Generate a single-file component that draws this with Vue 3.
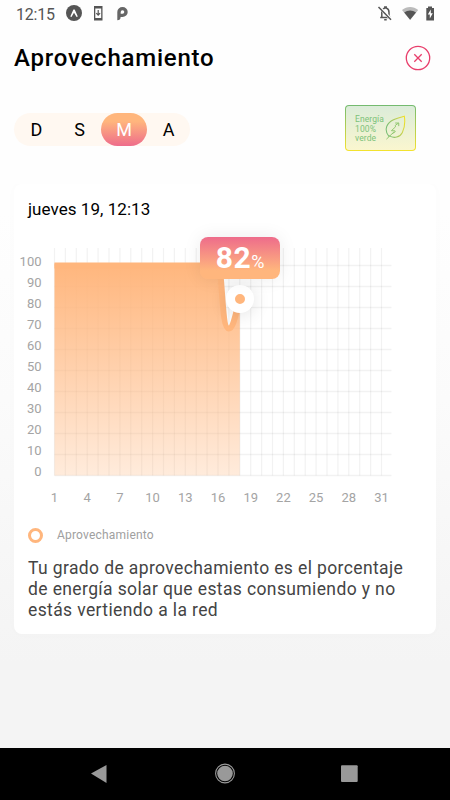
<template>
  <div class="screen">
    <div class="status-bar">
      <span class="clock">12:15</span>
      <svg class="status-left" width="64" height="18" viewBox="0 0 64 18">
        <circle cx="8" cy="9" r="8" fill="#555" />
        <path d="M4.300 12.400 7.400 5.600h1.300l3.100 6.800-1.200.6L8 8.800 5.500 13z" fill="#fff" />
        <path fill-rule="evenodd" d="M28 2h8.500v14.500H28zM29.300 4.500v9.500h5.900V4.500z" fill="#555" />
        <path d="M32.200 6v5M30.300 9.200l1.900 2 1.900-2" fill="none" stroke="#555" stroke-width="1.200" />
        <path fill-rule="evenodd" d="M51.300 16.300V8a5.200 5 0 1 1 5.200 5h-1.900a3.300 3.300 0 0 1-3.300 3.300zM54.700 9.800h1.700a1.800 1.800 0 1 0-1.700-1.800z" fill="#666" />
      </svg>
      <svg class="status-right" width="60" height="18" viewBox="0 0 60 18">
        <path d="M4.800 13.500V8.300c0-2.800 1.300-4 3-4.400V3h1.400v.9c1.900.5 2.800 2 2.800 4.400v5.200M3.200 13.600h10.500M7.200 15.700h2.500" fill="none" stroke="#555" stroke-width="1.500" />
        <path d="M2.300 3 14.400 15.700" stroke="#fff" stroke-width="3" />
        <path d="M1.500 3 14 15.800" stroke="#555" stroke-width="1.500" />
        <path d="M25 6c4.800-4 11.400-4 16.200 0l-8.100 9.900z" fill="#bbb" />
        <path d="M27.200 8.500c3.500-2.700 8.300-2.700 11.800 0l-5.900 7.300z" fill="#555" />
        <path d="M49.300 4H51V2.500h4V4h2v12.500h-7.700z" fill="#555" />
        <path d="m53.800 5.500-3 5h2v4l3-5.200h-2z" fill="#fff" />
      </svg>
    </div>

    <header class="header">
      <h1>Aprovechamiento</h1>
      <button class="close-btn" aria-label="Cerrar">
        <svg width="26" height="26" viewBox="0 0 26 26" fill="none" stroke="#e83e6b">
          <circle cx="13" cy="13" r="11.700" stroke-width="1.300" />
          <path d="m9.300 9.300 7.400 7.400m0-7.400-7.400 7.400" stroke-width="1.300" />
        </svg>
      </button>
    </header>

    <div class="toolbar">
      <div class="periods">
        <button
          v-for="p in periods"
          :key="p"
          class="period"
          :class="{ active: p === period }"
          @click="period = p"
        >{{ p }}</button>
      </div>
      <div class="green-badge">
        <div class="green-inner">
          <p>Energía<br />100%<br />verde</p>
          <svg width="21" height="26" viewBox="0 0 22 27" fill="none">
            <defs>
              <linearGradient id="leaf" x1="0" y1="0.3" x2="1" y2="0">
                <stop offset="0" stop-color="#79bd74" />
                <stop offset="0.6" stop-color="#bfcf55" />
                <stop offset="1" stop-color="#f5e21e" />
              </linearGradient>
            </defs>
            <path d="M4.200 22.500C-.5 17 .5 10.500 6.500 6.200 10.500 3.300 15.500 2.500 20.300 1.200c.8 5.800.4 12.200-2.100 17-2.500 5-8.700 6.700-14 3.300" stroke="url(#leaf)" stroke-width="1.100" />
            <path d="m1.500 25.200 7.800-7.500M7.500 19.500l3.200-2-.2-1-3.800-.2 4.300-4-.3-1.500 3.500-2.500m-3.500 0h3.700v3.200" stroke="#8ec56c" stroke-width="1" />
          </svg>
        </div>
      </div>
    </div>

    <main class="content">
      <section class="card">
        <p class="date">jueves 19, 12:13</p>
        <div class="chart">
          <svg width="422" height="290" viewBox="0 0 422 290">
            <defs>
              <linearGradient id="area" x1="0" y1="0" x2="0" y2="1">
                <stop offset="0" stop-color="#ffb67d" />
                <stop offset="1" stop-color="#ffb67d" stop-opacity="0.27" />
              </linearGradient>
            </defs>
            <g class="grid">
              <line v-for="d in 31" :key="'v' + d" :x1="xOf(d)" :x2="xOf(d)" y1="20" :y2="yOf(0)" />
              <line v-for="t in ticks" :key="'h' + t" :x1="xOf(1)" x2="377.5" :y1="yOf(t)" :y2="yOf(t)" />
            </g>
            <path :d="areaPath" fill="url(#area)" />
            <path :d="linePath" class="line" />
            <text v-for="t in ticks" :key="'y' + t" x="27.5" :y="yOf(t) + 0.5" text-anchor="end">{{ t }}</text>
            <text v-for="d in days" :key="'x' + d" :x="xOf(d)" y="274" text-anchor="middle">{{ d }}</text>
          </svg>
          <div class="marker"></div>
          <div class="tooltip"><b>82</b><span>%</span></div>
        </div>
        <div class="legend">
          <i class="legend-dot"></i>
          <span>Aprovechamiento</span>
        </div>
        <p class="description">
          Tu grado de aprovechamiento es el porcentaje<br />
          de energía solar que estas consumiendo y no<br />
          estás vertiendo a la red
        </p>
      </section>
    </main>

    <nav class="nav-bar">
      <svg width="450" height="52" viewBox="0 0 450 52" fill="#999">
        <path d="M91 25.500 106.500 17v18z" />
        <circle cx="225" cy="25.500" r="7.800" />
        <circle cx="225" cy="25.500" r="9.400" fill="none" stroke="#999" stroke-width="1.100" />
        <rect x="341" y="17.300" width="16.700" height="16.700" rx="1" />
      </svg>
    </nav>
  </div>
</template>

<script setup>
import { ref } from 'vue'

const periods = ['D', 'S', 'M', 'A']
const period = ref('M')

const ticks = [100, 90, 80, 70, 60, 50, 40, 30, 20, 10, 0]
const days = [1, 4, 7, 10, 13, 16, 19, 22, 25, 28, 31]

const xOf = (day) => 40.5 + (day - 1) * 10.9
const yOf = (value) => 247.5 - value * 2.1

// flat at 100 until day 16, then a dip before the current reading
const dip = `H${xOf(16)} C${xOf(16) + 5} 42 207 100.5 214.8 100.5 C219.5 100.5 222 84 ${xOf(18)} 71`
const linePath = `M${xOf(1)} 37.5 ${dip}`
const areaPath = `M${xOf(1)} 35.5 ${dip} V${yOf(0)} H${xOf(1)} Z`
</script>

<style>
body {
  margin: 0;
  background: #fff;
}
</style>

<style scoped>
.screen {
  width: 450px;
  height: 800px;
  display: flex;
  flex-direction: column;
  overflow: hidden;
  background: #fefefe;
  font-family: Roboto, 'Liberation Sans', sans-serif;
  color: #000;
}

.screen p,
.screen h1 {
  margin: 0;
}

button {
  border: none;
  background: none;
  padding: 0;
  font-family: inherit;
  cursor: pointer;
}

svg {
  display: block;
}

.status-bar {
  height: 28px;
  flex: none;
  display: flex;
  align-items: center;
  padding: 0 13px 0 16px;
  box-sizing: border-box;
}

.clock {
  font-size: 16px;
  letter-spacing: -0.2px;
  color: #555;
  width: 50px;
}

.status-left {
  margin-top: -2px;
}

.status-right {
  margin: -2px 0 0 auto;
}

.header {
  height: 60px;
  flex: none;
  display: flex;
  align-items: center;
  justify-content: space-between;
  padding: 0 19px 0 14px;
}

.header h1 {
  font-size: 24px;
  font-weight: 500;
  letter-spacing: 0.78px;
}

.toolbar {
  height: 80px;
  flex: none;
  display: flex;
  align-items: center;
  justify-content: space-between;
  padding: 0 34px 0 14px;
  margin-bottom: 16px;
}

.periods {
  display: flex;
  width: 176px;
  height: 33px;
  margin-top: 3px;
  padding-left: 1px;
  box-sizing: border-box;
  border-radius: 17px;
  background: #fff8f1;
}

.period {
  width: 43.5px;
  font-size: 18px;
  border-radius: 17px;
  color: #000;
}

.period.active {
  flex: none;
  width: 46px;
  color: #fff;
  background: linear-gradient(#ffb67d 25%, #ee6c8b);
}

.green-badge {
  width: 71px;
  height: 46px;
  padding: 1px;
  box-sizing: border-box;
  border-radius: 4px;
  background: linear-gradient(#73ba70, #f4e32e);
}

.green-inner {
  display: flex;
  gap: 1px;
  height: 44px;
  padding: 9px 0 0 9px;
  box-sizing: border-box;
  border-radius: 3px;
  background: linear-gradient(#dbecd9, #faf6cf);
}

.green-inner p {
  width: 29px;
  font-size: 8.5px;
  line-height: 9.5px;
  letter-spacing: 0.1px;
  white-space: nowrap;
  color: #7cc279;
}

.content {
  flex: 1;
  padding: 0 14px;
  overflow: hidden;
  background: linear-gradient(#fefefe 5%, #fbfbfb 38%, #f4f4f4 85%);
}

.card {
  height: 450px;
  box-sizing: border-box;
  border-radius: 8px;
  background: #fff;
  box-shadow: 0 0 12px rgba(0, 0, 0, 0.015);
}

.date {
  height: 44px;
  padding: 14px 14px 0;
  box-sizing: border-box;
  font-size: 17px;
  line-height: 22px;
  letter-spacing: 0.05px;
}

.chart {
  position: relative;
  height: 290px;
}

.chart text {
  font-size: 13px;
  fill: #a4a4a4;
}

.grid line {
  stroke: rgba(0, 0, 0, 0.05);
  stroke-width: 1.3;
}

.line {
  fill: none;
  stroke: #ffb67d;
  stroke-width: 6;
}

.marker {
  position: absolute;
  left: 212px;
  top: 57px;
  width: 28px;
  height: 28px;
  box-sizing: border-box;
  border: 9.5px solid #fff;
  border-radius: 50%;
  background: #ffb67d;
  box-shadow: 0 2px 18px rgba(0, 0, 0, 0.12);
}

.tooltip {
  position: absolute;
  left: 186px;
  top: 9px;
  width: 80px;
  height: 42px;
  display: flex;
  align-items: baseline;
  justify-content: center;
  border-radius: 8px;
  line-height: 41px;
  color: #fff;
  background: linear-gradient(#ee6c8b, #ffb67d 80%);
  box-shadow: 0 0 18px rgba(0, 0, 0, 0.08);
}

.tooltip b {
  font-size: 30px;
  letter-spacing: 0.5px;
}

.tooltip span {
  font-size: 18px;
}

.legend {
  display: flex;
  align-items: center;
  gap: 14px;
  height: 34px;
  padding-left: 14px;
}

.legend-dot {
  width: 15px;
  height: 15px;
  box-sizing: border-box;
  border: 3px solid #ffb67d;
  border-radius: 50%;
}

.legend span {
  font-size: 12px;
  letter-spacing: 0.2px;
  color: #a0a0a0;
}

.description {
  padding: 6px 14px 0;
  font-size: 17.5px;
  line-height: 21px;
  letter-spacing: 0.38px;
  white-space: nowrap;
  color: #444;
}

.nav-bar {
  height: 52px;
  flex: none;
  background: #000;
}
</style>
